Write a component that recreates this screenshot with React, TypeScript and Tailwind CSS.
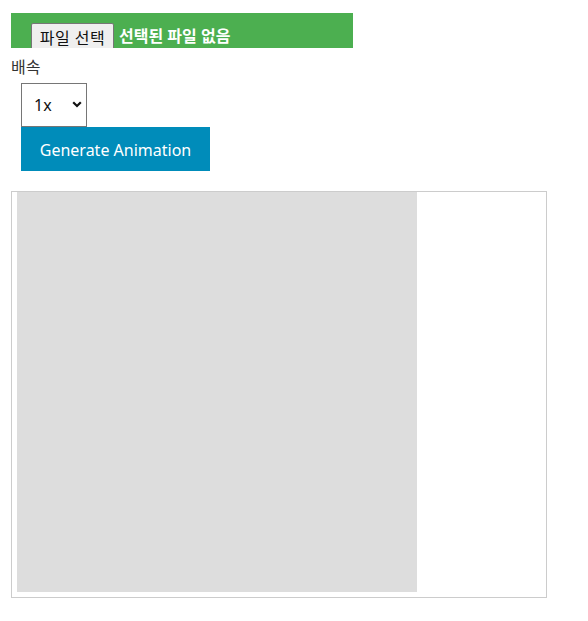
import React from "react";

export default function App() {
  return (
    <div
      className="min-h-[621px] bg-white px-[11px] pt-[13px] text-[16px] text-[#222]"
      style={{ fontFamily: '"Noto Sans", "Noto Sans CJK KR", sans-serif' }}
    >
      <div className="flex h-[35px] w-[342px] items-start overflow-hidden bg-[#4caf50] pl-[20px] pt-[10px]">
        <button className="h-[30px] w-[83px] shrink-0 rounded-[2px] border border-[#767676] bg-[#efefef] text-center text-[16px] leading-[24px] tracking-[0.5px] text-[#111]">
          파일 선택
        </button>
        <span className="ml-[5px] mt-[1px] text-[16px] font-bold leading-[24px] text-white">
          선택된 파일 없음
        </span>
      </div>
      <div className="pt-[7px] text-[16px] leading-[24px] text-[#333]">배속</div>
      <div className="ml-[10px] mt-[4px] flex flex-col items-start">
        <div className="relative h-[44px] w-[66px]">
          <select
            defaultValue="1x"
            className="h-full w-full appearance-none border border-[#767676] bg-white pl-[12px] text-[16px] text-[#111] outline-none"
          >
            <option value="0.5x">0.5x</option>
            <option value="1x">1x</option>
            <option value="2x">2x</option>
          </select>
          <svg
            className="pointer-events-none absolute left-[51px] top-[18px]"
            width="10"
            height="7"
            viewBox="0 0 10 7"
          >
            <path d="M1.2 1.2 L5 5 L8.8 1.2" fill="none" stroke="#111" strokeWidth="2.2" />
          </svg>
        </div>
        <button className="h-[44px] w-[189px] bg-[#008cba] pt-[2px] text-[16px] leading-[24px] text-white">
          Generate Animation
        </button>
      </div>
      <div className="mt-[20px] h-[407px] w-[536px] border border-[#cccccc] pl-[5px]">
        <div className="h-[400px] w-[400px] bg-[#dddddd]" />
      </div>
    </div>
  );
}
